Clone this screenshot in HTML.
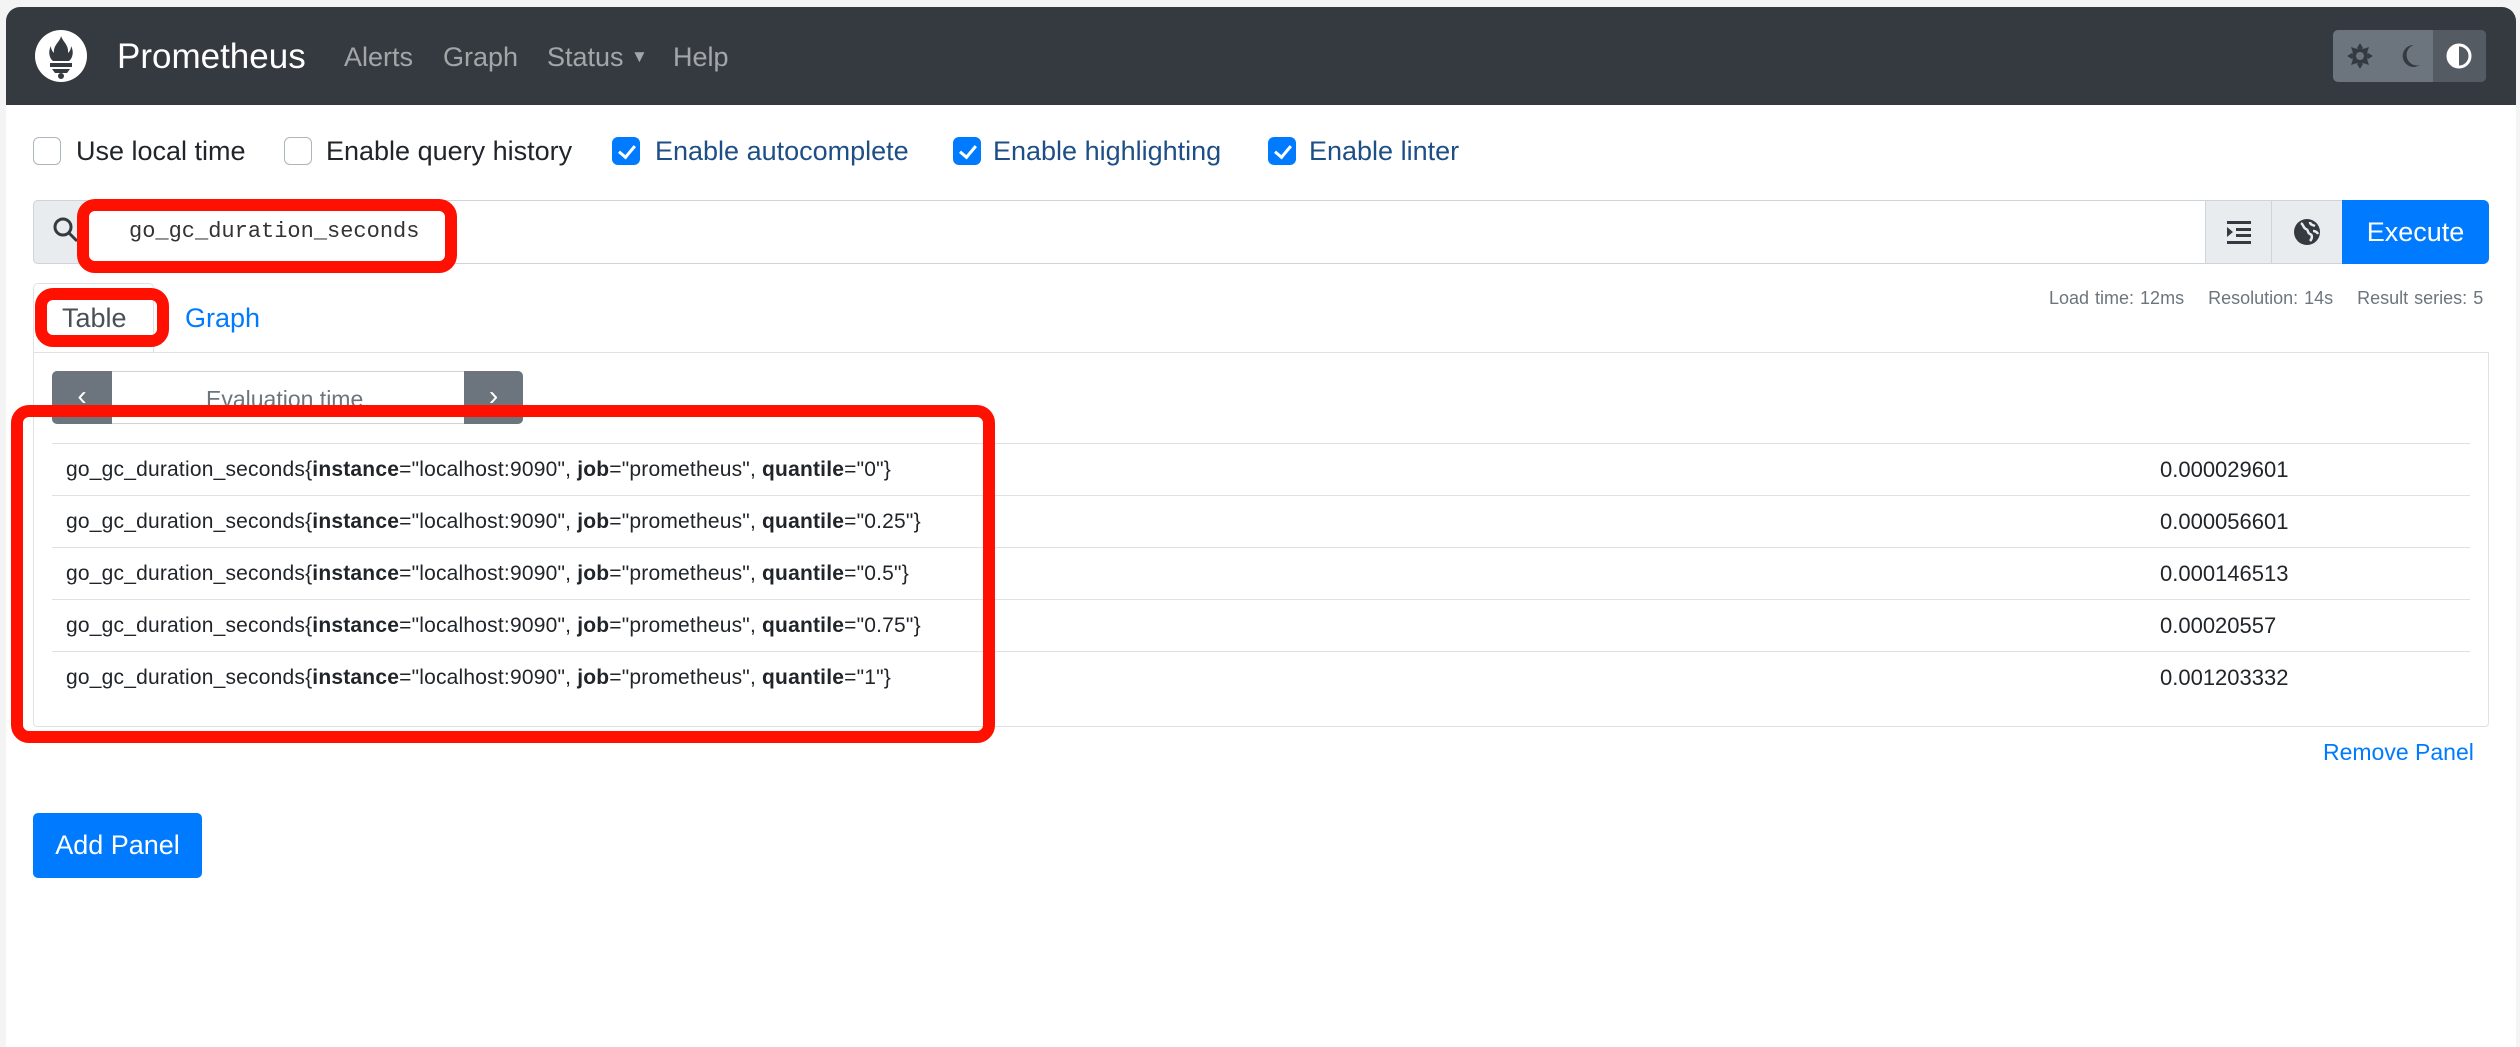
<!DOCTYPE html>
<html><head><meta charset="utf-8"><style>
*{box-sizing:border-box;margin:0;padding:0}
body{width:2520px;height:1034px;background:#f4f4f4;font-family:"Liberation Sans",sans-serif;position:relative;overflow:hidden;color:#212529}
.a{position:absolute}
.card{left:6px;top:7px;width:2510px;height:1040px;background:#fff;border-radius:14px 14px 0 0;overflow:hidden}
.nav{left:6px;top:7px;width:2510px;height:98px;background:#343a40;border-radius:14px 14px 0 0}
.nl{color:rgba(255,255,255,.55);font-size:27px;top:42px}
.cb{width:28px;height:28px;border:1.5px solid #adb5bd;border-radius:6px;top:137px;background:#fff}
.cb.on{background:#007bff;border-color:#007bff}
.cb.on:after{content:"";position:absolute;left:9px;top:4px;width:7px;height:13px;border:solid #fff;border-width:0 3px 3px 0;transform:rotate(40deg)}
.lbl{font-size:27px;top:136px;color:#212529}
.lbl.b{color:#1d4f86}
.row{left:52px;width:2418px;height:52px;border-top:1.5px solid #dee2e6;font-size:21px}
.row span.t{position:absolute;left:14px;top:14px;letter-spacing:.2px}
.row span.v{position:absolute;left:2108px;top:13px;font-size:22px}
.red{border:12px solid #ff1000;border-radius:18px}
</style></head><body>
<div class="a card"></div>
<div class="a nav"></div>
<svg class="a" style="left:35px;top:30px" width="52" height="52" viewBox="0 0 52 52"><circle cx="26" cy="26" r="26" fill="#fff"/><path d="M26 6c2 6 8 9 7 17 2-2 3-4 3-7 3 5 2 12-2 15H18c-4-3-5-10-2-15 0 3 1 5 3 7-1-8 6-11 7-17z" fill="#343a40"/><rect x="15" y="33" width="22" height="4" fill="#343a40"/><path d="M17 39h18l-3 4H20z" fill="#343a40"/><circle cx="26" cy="46" r="3" fill="#343a40"/></svg>
<div class="a" style="left:117px;top:37px;font-size:35px;color:#fff">Prometheus</div>
<div class="a nl" style="left:344px">Alerts</div>
<div class="a nl" style="left:443px">Graph</div>
<div class="a nl" style="left:547px">Status <span style="font-size:17px;vertical-align:4px">▼</span></div>
<div class="a nl" style="left:673px">Help</div>
<div class="a" style="left:2333px;top:30px;width:153px;height:52px;background:#6c757d;border-radius:5px"></div>
<div class="a" style="left:2433px;top:30px;width:53px;height:52px;background:#545b62;border-radius:0 5px 5px 0"></div>
<svg class="a" style="left:2347px;top:43px" width="26" height="26" viewBox="0 0 26 26"><g fill="#343a40"><circle cx="13" cy="13" r="8"/><path d="M13 0l3 5h-6zM13 26l3-5h-6zM0 13l5-3v6zM26 13l-5-3v6zM4 4l6 2-4 4zM22 22l-6-2 4-4zM22 4l-2 6-4-4zM4 22l2-6 4 4z"/></g><circle cx="13" cy="13" r="4" fill="#6c757d"/></svg>
<svg class="a" style="left:2400px;top:44px" width="22" height="24" viewBox="0 0 22 24"><path d="M14 1A11 11 0 1 0 20 21 10 10 0 0 1 14 1z" fill="#343a40"/></svg>
<svg class="a" style="left:2446px;top:43px" width="26" height="26" viewBox="0 0 26 26"><circle cx="13" cy="13" r="11" fill="none" stroke="#fff" stroke-width="3"/><path d="M13 2a11 11 0 0 0 0 22z" fill="#fff"/></svg>

<div class="a cb" style="left:33px"></div><div class="a lbl" style="left:76px">Use local time</div>
<div class="a cb" style="left:284px"></div><div class="a lbl" style="left:326px">Enable query history</div>
<div class="a cb on" style="left:612px"></div><div class="a lbl b" style="left:655px">Enable autocomplete</div>
<div class="a cb on" style="left:953px"></div><div class="a lbl b" style="left:993px">Enable highlighting</div>
<div class="a cb on" style="left:1268px"></div><div class="a lbl b" style="left:1309px">Enable linter</div>

<div class="a" style="left:33px;top:200px;width:2456px;height:64px;border:1.5px solid #ced4da;border-radius:5px;background:#fff"></div>
<div class="a" style="left:33px;top:200px;width:54px;height:64px;background:#e9ecef;border:1.5px solid #ced4da;border-radius:5px 0 0 5px"></div>
<svg class="a" style="left:52px;top:216px" width="28" height="28" viewBox="0 0 28 28"><circle cx="11" cy="11" r="8" fill="none" stroke="#343a40" stroke-width="3"/><path d="M17 17l8 8" stroke="#343a40" stroke-width="3"/></svg>
<div class="a" style="left:129px;top:219px;font-family:'Liberation Mono',monospace;font-size:22px;color:#333">go_gc_duration_seconds</div>
<div class="a" style="left:2205px;top:200px;width:67px;height:64px;background:#e9ecef;border:1.5px solid #ced4da"></div>
<div class="a" style="left:2271px;top:200px;width:72px;height:64px;background:#e9ecef;border:1.5px solid #ced4da"></div>
<svg class="a" style="left:2226px;top:219px" width="26" height="26" viewBox="0 0 26 26"><g fill="#343a40"><rect x="1" y="2" width="24" height="3"/><rect x="10" y="9" width="15" height="3"/><rect x="10" y="15" width="15" height="3"/><rect x="1" y="22" width="24" height="3"/><path d="M1 8l6 5-6 5z"/></g></svg>
<svg class="a" style="left:2293px;top:218px" width="28" height="28" viewBox="0 0 28 28"><circle cx="14" cy="14" r="13" fill="#343a40"/><path d="M8 5c3 2 2 5 5 6s1 4 4 5 2 5 0 7M17 4c0 3 3 3 5 4M20 13c2 0 4 1 5 3" fill="none" stroke="#e9ecef" stroke-width="2.5"/></svg>
<div class="a" style="left:2342px;top:200px;width:147px;height:64px;background:#007bff;border-radius:0 6px 6px 0;color:#fff;font-size:27px;text-align:center;line-height:64px">Execute</div>
<div class="a red" style="left:77px;top:199px;width:380px;height:74px"></div>

<div class="a" style="left:2049px;top:288px;font-size:18px;color:#6c757d;word-spacing:1px">Load time: 12ms&nbsp;&nbsp;&nbsp;&nbsp;Resolution: 14s&nbsp;&nbsp;&nbsp;&nbsp;Result series: 5</div>
<div class="a" style="left:33px;top:283px;width:121px;height:70px;border:1.5px solid #dee2e6;border-bottom:none;border-radius:5px 5px 0 0;background:#fff"></div>
<div class="a" style="left:62px;top:303px;font-size:27px;color:#495057">Table</div>
<div class="a" style="left:185px;top:303px;font-size:27px;color:#007bff">Graph</div>
<div class="a red" style="left:35px;top:288px;width:134px;height:59px"></div>

<div class="a" style="left:33px;top:352px;width:2456px;height:375px;border:1.5px solid #dee2e6;border-radius:0 0 4px 4px"></div>
<div class="a" style="left:52px;top:371px;width:471px;height:53px;border:1.5px solid #ced4da;border-radius:5px;background:#fff"></div>
<div class="a" style="left:52px;top:371px;width:60px;height:53px;background:#6c757d;border-radius:5px 0 0 5px;color:#fff;font-size:28px;text-align:center;line-height:50px">‹</div>
<div class="a" style="left:464px;top:371px;width:59px;height:53px;background:#6c757d;border-radius:0 5px 5px 0;color:#fff;font-size:28px;text-align:center;line-height:50px">›</div>
<div class="a" style="left:206px;top:386px;font-size:23px;color:#6c757d">Evaluation time</div>

<div class="a row" style="top:443px"><span class="t">go_gc_duration_seconds{<b>instance</b>="localhost:9090", <b>job</b>="prometheus", <b>quantile</b>="0"}</span><span class="v">0.000029601</span></div>
<div class="a row" style="top:495px"><span class="t">go_gc_duration_seconds{<b>instance</b>="localhost:9090", <b>job</b>="prometheus", <b>quantile</b>="0.25"}</span><span class="v">0.000056601</span></div>
<div class="a row" style="top:547px"><span class="t">go_gc_duration_seconds{<b>instance</b>="localhost:9090", <b>job</b>="prometheus", <b>quantile</b>="0.5"}</span><span class="v">0.000146513</span></div>
<div class="a row" style="top:599px"><span class="t">go_gc_duration_seconds{<b>instance</b>="localhost:9090", <b>job</b>="prometheus", <b>quantile</b>="0.75"}</span><span class="v">0.00020557</span></div>
<div class="a row" style="top:651px"><span class="t">go_gc_duration_seconds{<b>instance</b>="localhost:9090", <b>job</b>="prometheus", <b>quantile</b>="1"}</span><span class="v">0.001203332</span></div>
<div class="a red" style="left:11px;top:405px;width:984px;height:338px"></div>

<div class="a" style="left:2323px;top:739px;font-size:23px;color:#007bff">Remove Panel</div>
<div class="a" style="left:33px;top:813px;width:169px;height:65px;background:#007bff;border-radius:5px;color:#fff;font-size:27px;text-align:center;line-height:65px">Add Panel</div>
</body></html>
